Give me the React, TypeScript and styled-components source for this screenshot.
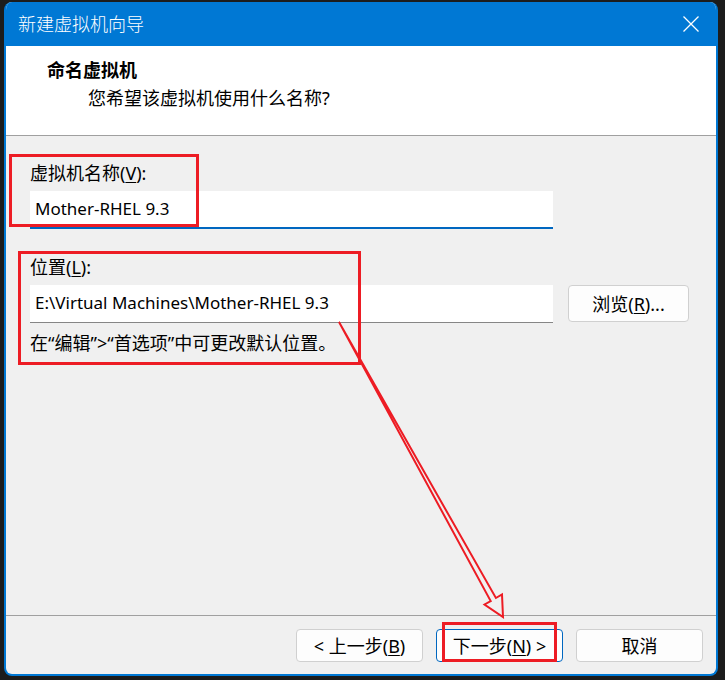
import styled, { createGlobalStyle } from 'styled-components';

const GlobalStyle = createGlobalStyle`
  html, body {
    margin: 0;
    padding: 0;
    background: #1c1c1c;
  }
`;

const CJK = `"Noto Sans", "Noto Sans CJK SC", sans-serif`;

const Page = styled.div`
  position: relative;
  width: 725px;
  height: 680px;
  padding: 2px 7px 4px 4px;
  box-sizing: border-box;
  font-family: ${CJK};
  color: #000;
`;

const Window = styled.div`
  width: 714px;
  height: 674px;
  box-sizing: border-box;
  border: 2px solid #0078d4;
  border-top: none;
  border-radius: 8px;
  overflow: hidden;
  display: flex;
  flex-direction: column;
  background: #f0f0f0;
`;

const TitleBar = styled.div`
  height: 44px;
  flex: none;
  background: #0078d4;
  display: flex;
  align-items: center;
  justify-content: space-between;
  padding: 0 17px 0 12px;
`;

const TitleText = styled.span`
  color: #fff;
  font-size: 18px;
  line-height: 24px;
  font-weight: 300;
`;

const CloseIcon = styled.svg`
  width: 16px;
  height: 16px;
  display: block;
`;

const Header = styled.div`
  height: 90px;
  flex: none;
  box-sizing: border-box;
  background: #fff;
  border-bottom: 1px solid #a0a0a0;
`;

const HeaderTitle = styled.div`
  font-size: 18px;
  font-weight: 700;
  line-height: 26px;
  padding: 11px 0 0 41px;
`;

const HeaderSub = styled.div`
  font-size: 18px;
  line-height: 26px;
  padding: 2px 0 0 82px;
`;

const Body = styled.div`
  flex: 1;
  padding: 24px 0 0 24px;
`;

const Label = styled.div<{ $top?: number }>`
  font-size: 18px;
  line-height: 26px;
  margin-top: ${({ $top }) => $top ?? 0}px;
`;

const Field = styled.div<{ $focused?: boolean }>`
  width: 523px;
  height: 38px;
  box-sizing: border-box;
  background: #fff;
  border-bottom: ${({ $focused }) => ($focused ? '2px solid #0067c0' : '1px solid #868686')};
  display: flex;
  align-items: center;
  padding: 0 0 ${({ $focused }) => ($focused ? 1 : 2)}px 5px;
  font-family: "Noto Sans", "Liberation Sans", sans-serif;
  font-size: 17px;
  white-space: nowrap;
`;

const Row = styled.div`
  display: flex;
  align-items: flex-start;
  gap: 15px;
  margin-top: 5px;
`;

const Hint = styled.div`
  font-size: 18px;
  line-height: 26px;
  margin-top: 7px;
`;

const Footer = styled.div`
  height: 59px;
  flex: none;
  box-sizing: border-box;
  border-top: 1px solid #a0a0a0;
  display: flex;
  justify-content: flex-end;
  align-items: flex-start;
  gap: 13px;
  padding: 13px 13px 0 0;
`;

const Button = styled.div<{ $primary?: boolean; $w?: number; $h?: number }>`
  width: ${({ $w }) => $w ?? 127}px;
  height: ${({ $h }) => $h ?? 33}px;
  box-sizing: border-box;
  border: 1px solid ${({ $primary }) => ($primary ? '#0067c0' : '#d0d0d0')};
  border-radius: 4px;
  background: #fdfdfd;
  display: flex;
  align-items: center;
  justify-content: center;
  font-size: 18px;
  line-height: 24px;
  white-space: nowrap;
`;

const Key = styled.span`
  text-decoration: underline;
  text-underline-offset: 2px;
`;

const Mark = styled.div<{ $x: number; $y: number; $w: number; $h: number }>`
  position: absolute;
  left: ${({ $x }) => $x}px;
  top: ${({ $y }) => $y}px;
  width: ${({ $w }) => $w}px;
  height: ${({ $h }) => $h}px;
  box-sizing: border-box;
  border: 3px solid #ed1c24;
  pointer-events: none;
`;

const Overlay = styled.svg`
  position: absolute;
  left: 0;
  top: 0;
  width: 725px;
  height: 680px;
  pointer-events: none;
`;

export default function App() {
  return (
    <>
      <GlobalStyle />
      <Page>
        <Window>
          <TitleBar>
            <TitleText>新建虚拟机向导</TitleText>
            <CloseIcon viewBox="0 0 16 16">
              <path d="M0.5 0.5 L15.5 15.5 M15.5 0.5 L0.5 15.5" stroke="#fff" strokeWidth="1.3" fill="none" />
            </CloseIcon>
          </TitleBar>
          <Header>
            <HeaderTitle>命名虚拟机</HeaderTitle>
            <HeaderSub>您希望该虚拟机使用什么名称?</HeaderSub>
          </Header>
          <Body>
            <Label>
              虚拟机名称(<Key>V</Key>):
            </Label>
            <Row>
              <Field $focused>Mother-RHEL 9.3</Field>
            </Row>
            <Label $top={25}>
              位置(<Key>L</Key>):
            </Label>
            <Row>
              <Field>E:\Virtual Machines\Mother-RHEL 9.3</Field>
              <Button $w={121} $h={37}>
                浏览(<Key>R</Key>)...
              </Button>
            </Row>
            <Hint>在“编辑”&gt;“首选项”中可更改默认位置。</Hint>
          </Body>
          <Footer>
            <Button>
              &lt; 上一步(<Key>B</Key>)
            </Button>
            <Button $primary>
              下一步(<Key>N</Key>) &gt;
            </Button>
            <Button>取消</Button>
          </Footer>
        </Window>

        <Mark $x={9} $y={154} $w={190} $h={73} />
        <Mark $x={18} $y={251} $w={343} $h={114} />
        <Mark $x={442} $y={622} $w={115} $h={40} />
        <Overlay viewBox="0 0 725 680">
          <polygon
            points="339,322 495.9,598 502,594.5 503,617 484.5,604.5 490.7,601"
            fill="none"
            stroke="#ed1c24"
            strokeWidth="2"
          />
        </Overlay>
      </Page>
    </>
  );
}
